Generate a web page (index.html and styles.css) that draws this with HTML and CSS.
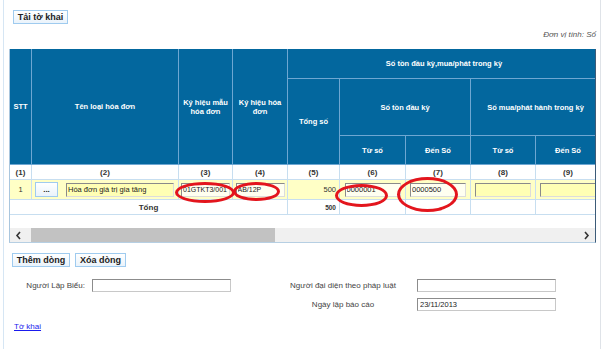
FILE: index.html
```html
<!DOCTYPE html>
<html lang="vi">
  <head>
    <meta charset="UTF-8" />
    <title>Tờ khai hóa đơn</title>
    <link rel="stylesheet" href="styles.css">
  </head>
  <body>
    <div class="page">
      <div class="content">
        <div class="toolbar">
          <button class="btn btn-load">Tải tờ khai</button>
        </div>
        <div class="unit">Đơn vị tính: Số</div>

        <!-- Bảng hóa đơn -->
        <div class="grid">
          <div class="grid-body">
            <table>
              <colgroup>
                <col style="width: 22px" />
                <col style="width: 147px" />
                <col style="width: 54px" />
                <col style="width: 55px" />
                <col style="width: 52px" />
                <col style="width: 66px" />
                <col style="width: 65px" />
                <col style="width: 65px" />
                <col style="width: 65px" />
              </colgroup>
              <thead>
                <tr class="h1">
                  <th rowspan="3">STT</th>
                  <th rowspan="3">Tên loại hóa đơn</th>
                  <th rowspan="3">Ký hiệu mẫu<br />hóa đơn</th>
                  <th rowspan="3">Ký hiệu hóa<br />đơn</th>
                  <th colspan="5">Số tồn đầu kỳ,mua/phát trong kỳ</th>
                </tr>
                <tr class="h2">
                  <th rowspan="2">Tổng số</th>
                  <th colspan="2">Số tồn đầu kỳ</th>
                  <th colspan="2">Số mua/phát hành trong kỳ</th>
                </tr>
                <tr class="h3">
                  <th>Từ số</th>
                  <th>Đến Số</th>
                  <th>Từ số</th>
                  <th>Đến Số</th>
                </tr>
              </thead>
              <tbody>
                <tr class="num-row">
                  <td>(1)</td>
                  <td>(2)</td>
                  <td>(3)</td>
                  <td>(4)</td>
                  <td>(5)</td>
                  <td>(6)</td>
                  <td>(7)</td>
                  <td>(8)</td>
                  <td>(9)</td>
                </tr>
                <tr class="data-row">
                  <td class="center">1</td>
                  <td>
                    <div class="name-cell">
                      <button class="btn btn-dots">...</button>
                      <input class="field field-name" type="text" value="Hóa đơn giá trị gia tăng" />
                    </div>
                  </td>
                  <td><input class="field" type="text" value="01GTKT3/001" /></td>
                  <td><input class="field" type="text" value="AB/12P" /></td>
                  <td class="right">500</td>
                  <td><input class="field" type="text" value="0000001" /></td>
                  <td><input class="field" type="text" value="0000500" /></td>
                  <td><input class="field" type="text" value="" /></td>
                  <td><input class="field" type="text" value="" /></td>
                </tr>
                <tr class="total-row">
                  <td colspan="4" class="center bold">Tổng</td>
                  <td class="right bold small">500</td>
                  <td></td>
                  <td></td>
                  <td></td>
                  <td></td>
                </tr>
              </tbody>
            </table>

            <!-- vòng đỏ đánh dấu -->
            <span class="mark mark-1"></span>
            <span class="mark mark-2"></span>
            <span class="mark mark-3"></span>
            <span class="mark mark-4"></span>
          </div>
          <div class="hscroll">
            <span class="arrow">
              <svg width="7" height="9" viewBox="0 0 7 9"><path d="M5 1 L2 4.5 L5 8" fill="none" stroke="#333" stroke-width="1.6"/></svg>
            </span>
            <div class="track"><div class="thumb"></div></div>
            <span class="arrow">
              <svg width="7" height="9" viewBox="0 0 7 9"><path d="M2 1 L5 4.5 L2 8" fill="none" stroke="#333" stroke-width="1.6"/></svg>
            </span>
          </div>
        </div>

        <div class="row-actions">
          <button class="btn btn-add">Thêm dòng</button>
          <button class="btn btn-del">Xóa dòng</button>
        </div>

        <div class="sign-form">
          <label class="lbl lbl-right">Người Lập Biểu:</label>
          <input class="text-box" type="text" />
          <span></span>
          <label class="lbl">Người đại diện theo pháp luật</label>
          <span></span>
          <input class="text-box" type="text" />

          <span></span>
          <span></span>
          <span></span>
          <label class="lbl">Ngày lập báo cáo</label>
          <span></span>
          <input class="text-box" type="text" value="23/11/2013" />
        </div>

        <a class="link" href="#">Tờ khai</a>
      </div>
    </div>
  </body>
</html>
```

FILE: styles.css
```css
/* Page */
body {
  margin: 0;
  font-family: "Liberation Sans", Arial, sans-serif;
  font-size: 8px;
  color: #333;
  background: #fff;
}

.page {
  margin-left: 3px;
  width: 598px;
  height: 349px;
  box-sizing: border-box;
  border-left: 1px solid #d6e6f4;
  border-right: 1px solid #dfe3e8;
}

.content {
  width: 587px;
  padding-left: 5px;
}

/* Buttons */
.btn {
  font-family: "Liberation Sans", Arial, sans-serif;
  font-weight: bold;
  font-size: 9px;
  color: #222;
  background: linear-gradient(#ffffff, #eaf3fb);
  border: 1px solid #9fcbef;
  padding: 0;
  margin: 0;
  height: 14px;
  line-height: 12px;
  cursor: pointer;
}

.toolbar {
  padding-top: 10px;
  height: 14px;
}

.btn-load {
  margin-left: 4px;
  width: 55px;
  display: block;
}

.unit {
  height: 25px;
  line-height: 22px;
  text-align: right;
  font-style: italic;
  color: #555;
  font-size: 8px;
}

/* Grid */
.grid {
  width: 587px;
  height: 194px;
  box-sizing: border-box;
  border-left: 1px solid #a9c6de;
  border-right: 1px solid #3c5b78;
  border-bottom: 1px solid #b6cfe3;
}

.grid-body {
  position: relative;
  height: 179px;
  overflow: hidden;
}

table {
  width: 591px;
  border-collapse: collapse;
  table-layout: fixed;
  margin-left: -1px;
}

th {
  background-color: #03679e;
  color: #fff;
  font-weight: bold;
  font-size: 7.5px;
  border: 1px solid #6ea7d2;
  padding: 0;
  line-height: 9px;
}

thead tr:first-child th {
  border-top: none;
}

.h1 th[colspan] {
  height: 29px;
}

.h2 th {
  height: 56px;
}

.h3 th {
  height: 28px;
}

td {
  border: 1px solid #c7def0;
  padding: 0;
  font-size: 7.5px;
}

.num-row td {
  height: 14px;
  text-align: center;
  font-weight: bold;
  font-size: 8px;
  color: #333;
}

.data-row td {
  height: 19px;
  background-color: #ffffc6;
  text-align: center;
}

.total-row td {
  height: 14px;
}

.center {
  text-align: center;
}

.right {
  text-align: right !important;
  padding-right: 3px;
}

.bold {
  font-weight: bold;
  font-size: 8px;
}

.small {
  font-size: 6.5px;
}

.name-cell {
  display: flex;
  align-items: center;
  gap: 8px;
  padding-left: 3px;
}

.btn-dots {
  width: 23px;
  height: 15px;
  font-size: 8px;
  line-height: 10px;
}

.field {
  box-sizing: border-box;
  width: 56px;
  height: 14px;
  margin: 0;
  padding: 0 1px;
  font-family: "Liberation Sans", Arial, sans-serif;
  font-size: 7.5px;
  color: #222;
  background: #ffffb4;
  border: 1px solid #dcdcdc;
  border-top-color: #8a8a8a;
  border-left-color: #8a8a8a;
  vertical-align: middle;
}

.field-name {
  width: 108px;
}

.data-row td:nth-child(3) .field,
.data-row td:nth-child(4) .field {
  width: 49px;
  font-size: 7px;
  background: #fffff0;
}

.data-row td:nth-child(6) .field,
.data-row td:nth-child(7) .field {
  background: #fffff0;
}

/* red annotation rings */
.mark {
  position: absolute;
  border: 3px solid #e3151d;
  border-radius: 50%;
  box-sizing: border-box;
}

.mark-1 { left: 165px; top: 133px; width: 60px; height: 21px; }
.mark-2 { left: 223px; top: 133px; width: 47px; height: 19px; }
.mark-3 { left: 325px; top: 135px; width: 53px; height: 23px; }
.mark-4 { left: 387px; top: 128px; width: 61px; height: 35px; }

/* Horizontal scrollbar */
.hscroll {
  display: flex;
  height: 14px;
  background: #f0f0f0;
  align-items: center;
}

.arrow {
  width: 17px;
  display: flex;
  justify-content: center;
}

.track {
  flex: 1;
  height: 14px;
  position: relative;
}

.thumb {
  margin-left: 4px;
  width: 244px;
  height: 14px;
  background: #c2c2c2;
}

/* Actions */
.row-actions {
  display: flex;
  gap: 5px;
  margin-top: 10px;
  margin-left: 3px;
}

.btn-add {
  width: 58px;
}

.btn-del {
  width: 51px;
}

/* Signature form */
.sign-form {
  display: grid;
  grid-template-columns: 70px 139px 50px 124px 12px 139px;
  grid-auto-rows: 13px;
  row-gap: 6px;
  margin-top: 12px;
  margin-left: 13px;
  align-items: center;
}

.lbl {
  text-align: center;
  color: #444;
  font-size: 8px;
}

.lbl-right {
  text-align: right;
  padding-right: 7px;
}

.text-box {
  box-sizing: border-box;
  width: 139px;
  height: 13px;
  margin: 0;
  padding: 0 2px;
  font-family: "Liberation Sans", Arial, sans-serif;
  font-size: 7.5px;
  color: #222;
  border: 1px solid #c8c8c8;
  border-top-color: #8c8c8c;
  border-left-color: #8c8c8c;
}

.link {
  display: inline-block;
  margin-top: 11px;
  margin-left: 5px;
  color: #1a1aee;
  font-size: 8px;
}
```
